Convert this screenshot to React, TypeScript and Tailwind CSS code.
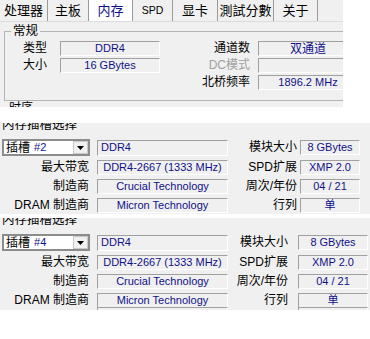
import clsx from "clsx";
import type { ReactNode } from "react";

const tabs = [
  { label: "处理器", w: "w-[48px]" },
  { label: "主板", w: "w-[41px]" },
  { label: "内存", w: "w-[44px]", active: true },
  { label: "SPD", w: "w-[40px]" },
  { label: "显卡", w: "w-[45px]" },
  { label: "測試分數", w: "w-[56px]" },
  { label: "关于", w: "w-[44px]" },
];

function Field({ className, children }: { className?: string; children?: ReactNode }) {
  return (
    <div
      className={clsx(
        "h-[15px] shrink-0 flex items-center justify-center overflow-hidden whitespace-nowrap border border-[#a0a0a0] border-b-white border-r-white bg-[#f0f0f0] text-[11px] leading-none text-[#10108a]",
        className
      )}
    >
      {children}
    </div>
  );
}

function Label({ className, children }: { className?: string; children: ReactNode }) {
  return (
    <div className={clsx("shrink-0 text-right text-[12px] leading-[15px] whitespace-nowrap text-black", className)}>
      {children}
    </div>
  );
}

function SlotSelect({ slot }: { slot: string }) {
  return (
    <div className="ml-[2px] w-[88px] h-[17px] shrink-0 flex items-center border-2 border-[#8c8c8c] bg-white">
      <span className="ml-[2px] text-[12px] leading-none text-black">插槽</span>
      <span className="ml-[4px] text-[11px] leading-none text-[#10108a]">{slot}</span>
      <div className="ml-auto w-[15px] h-[13px] flex items-center justify-center bg-[#f0f0f0] border border-[#c8c8c8]">
        <svg width="7" height="4" viewBox="0 0 7 4">
          <path d="M0 0h7L3.5 4z" fill="#000" />
        </svg>
      </div>
    </div>
  );
}

function SlotPanel({
  slot,
  rightLabelW,
  rightFieldCls,
  extraRow,
}: {
  slot: string;
  rightLabelW: string;
  rightFieldCls: string;
  extraRow?: boolean;
}) {
  const rows = [
    { l: "最大带宽", v: "DDR4-2667 (1333 MHz)", rl: "SPD扩展", rv: "XMP 2.0" },
    { l: "制造商", v: "Crucial Technology", rl: "周次/年份", rv: "04 / 21" },
    { l: "DRAM 制造商", v: "Micron Technology", rl: "行列", rv: "单" },
  ];
  return (
    <div className={clsx("w-[370px] bg-[#f0f0f0] overflow-hidden", extraRow ? "h-[92px]" : "h-[91px]")}>
      <div className="h-[13px] overflow-hidden pl-[2px]">
        <div className="-mt-[6px] text-[12.5px] leading-[16px] text-black">内存插槽选择</div>
      </div>
      <div className="mt-[3px] flex flex-col gap-[4px]">
        <div className="h-[17px] shrink-0 flex items-center">
          <SlotSelect slot={slot} />
          <Field className="ml-[7px] w-[131px] h-[16px] !justify-start pl-[3px]">DDR4</Field>
          <Label className={rightLabelW}>模块大小</Label>
          <Field className={rightFieldCls}>8 GBytes</Field>
        </div>
        {rows.map((r) => (
          <div key={r.l} className="h-[15px] shrink-0 flex items-center">
            <Label className="w-[89px]">{r.l}</Label>
            <Field className="ml-[8px] w-[131px]">{r.v}</Field>
            <Label className={rightLabelW}>{r.rl}</Label>
            <Field className={rightFieldCls}>{r.rv}</Field>
          </div>
        ))}
        {extraRow && (
          <div className="h-[15px] shrink-0 -mt-[5px] flex items-center">
            <div className="w-[89px] shrink-0" />
            <Field className="ml-[8px] w-[131px]" />
            <div className={clsx("shrink-0", rightLabelW)} />
            <Field className={rightFieldCls} />
          </div>
        )}
      </div>
    </div>
  );
}

export default function App() {
  return (
    <div className="w-[370px] h-[339px] bg-white font-['Liberation_Sans','Noto_Sans_CJK_SC',sans-serif] overflow-hidden">
      <div className="w-[343px] h-[107px] bg-[#f0f0f0] overflow-hidden">
        <div className="flex h-[22px] border-b border-[#dcdcdc]">
          {tabs.map((t) => (
            <div
              key={t.label}
              className={clsx(
                "h-full flex items-center justify-center border-r border-[#9a9a9a] shrink-0",
                t.w,
                t.active ? "bg-white text-[#10108a]" : "text-black",
                t.label === "SPD" ? "text-[10.5px]" : "text-[13px]"
              )}
            >
              {t.label}
            </div>
          ))}
        </div>
        <fieldset className="ml-[4px] mt-[2px] w-[360px] h-[77px] p-0 m-0 border border-[#b4b4b4]">
          <legend className="ml-[6px] px-[2px] text-[12.5px] leading-[14px] text-black">常规</legend>
          <div className="pt-[3px] flex flex-col">
            <div className="h-[17px] flex items-start">
              <Label className="w-[50px] pr-[8px]">类型</Label>
              <Field className="ml-[5px] w-[100px] text-[10.5px]">DDR4</Field>
              <Label className="w-[90px]">通道数</Label>
              <Field className="ml-[8px] w-[100px] text-[12px]">双通道</Field>
            </div>
            <div className="h-[17px] flex items-start">
              <Label className="w-[50px] pr-[8px]">大小</Label>
              <Field className="ml-[5px] w-[100px] text-[10.5px]">16 GBytes</Field>
              <Label className="w-[90px] !text-[#a0a0a0]">DC模式</Label>
              <Field className="ml-[8px] w-[100px]" />
            </div>
            <div className="h-[17px] flex items-start">
              <div className="w-[155px] shrink-0" />
              <Label className="w-[90px]">北桥频率</Label>
              <Field className="ml-[8px] w-[100px] text-[10.5px]">1896.2 MHz</Field>
            </div>
          </div>
        </fieldset>
        <div className="ml-[9px] text-[12px] leading-[14px] text-black">时序</div>
      </div>

      <div className="mt-[16px]">
        <SlotPanel slot="#2" rightLabelW="w-[69px]" rightFieldCls="ml-[3px] w-[60px]" />
      </div>
      <div className="mt-[4px]">
        <SlotPanel slot="#4" rightLabelW="w-[60px]" rightFieldCls="ml-[10px] w-[70px]" extraRow />
      </div>
    </div>
  );
}
